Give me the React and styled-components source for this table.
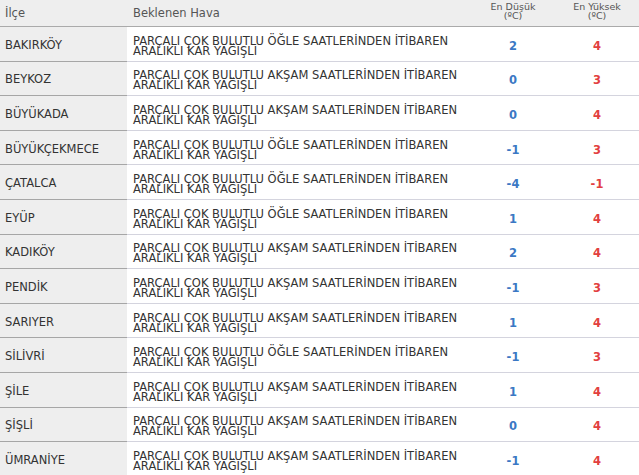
import React from "react";
import styled, { createGlobalStyle } from "styled-components";

const Global = createGlobalStyle`
  html, body { margin: 0; padding: 0; background: #fff; }
  body { font-family: "DejaVu Sans", Verdana, sans-serif; }
`;

const Table = styled.div`
  width: 639px;
  display: flex;
  flex-direction: column;
  color: #333;
  font-size: 11.5px;
`;

const HeadRow = styled.div`
  display: grid;
  grid-template-columns: 127px 344px 84px 84px;
  height: 26px;
  background: #eeeeee;
  border-bottom: 1px solid #aaaaaa;
`;

const HeadCell = styled.div`
  display: flex;
  align-items: center;
  padding-left: ${(p) => (p.$center ? 0 : p.$pad)}px;
  justify-content: ${(p) => (p.$center ? "center" : "flex-start")};
  text-align: ${(p) => (p.$center ? "center" : "left")};
  font-size: ${(p) => (p.$small ? 9.5 : 11.5)}px;
  line-height: ${(p) => (p.$small ? "9px" : "normal")};
  padding-bottom: ${(p) => (p.$small ? 4 : 1)}px;
  color: #555;
`;

const Row = styled.div`
  display: grid;
  grid-template-columns: 127px 344px 84px 84px;
  height: 34.6px;
`;

const NameCell = styled.div`
  background: #eeeeee;
  border-bottom: 1px solid #a6a6a6;
  display: flex;
  align-items: center;
  padding-left: 5px;
  padding-top: 2px;
  box-sizing: border-box;
`;

const Cell = styled.div`
  border-bottom: 1px solid #d4d4de;
  display: flex;
  align-items: center;
  box-sizing: border-box;
  padding-left: ${(p) => p.$pad || 0}px;
  justify-content: ${(p) => (p.$center ? "center" : "flex-start")};
`;

const Desc = styled.div`
  line-height: 10px;
  padding-top: 4px;
`;

const Num = styled.span`
  font-weight: bold;
  font-size: 11.5px;
  padding-top: 4px;
  color: ${(p) => (p.$hot ? "#e2403f" : "#3b78c4")};
`;

const rows = [
  ["BAKIRKÖY", "ÖĞLE", "2", "4"],
  ["BEYKOZ", "AKŞAM", "0", "3"],
  ["BÜYÜKADA", "AKŞAM", "0", "4"],
  ["BÜYÜKÇEKMECE", "ÖĞLE", "-1", "3"],
  ["ÇATALCA", "ÖĞLE", "-4", "-1"],
  ["EYÜP", "ÖĞLE", "1", "4"],
  ["KADIKÖY", "AKŞAM", "2", "4"],
  ["PENDİK", "AKŞAM", "-1", "3"],
  ["SARIYER", "AKŞAM", "1", "4"],
  ["SİLİVRİ", "ÖĞLE", "-1", "3"],
  ["ŞİLE", "AKŞAM", "1", "4"],
  ["ŞİŞLİ", "AKŞAM", "0", "4"],
  ["ÜMRANİYE", "AKŞAM", "-1", "4"],
];

export default function App() {
  return (
    <>
      <Global />
      <Table>
        <HeadRow>
          <HeadCell $pad={5}>İlçe</HeadCell>
          <HeadCell $pad={6}>Beklenen Hava</HeadCell>
          <HeadCell $center $small>
            En Düşük
            <br />
            (ºC)
          </HeadCell>
          <HeadCell $center $small>
            En Yüksek
            <br />
            (ºC)
          </HeadCell>
        </HeadRow>
        {rows.map(([name, time, lo, hi]) => (
          <Row key={name}>
            <NameCell>{name}</NameCell>
            <Cell $pad={6}>
              <Desc>
                PARÇALI ÇOK BULUTLU {time} SAATLERİNDEN İTİBAREN
                <br />
                ARALIKLI KAR YAĞIŞLI
              </Desc>
            </Cell>
            <Cell $center>
              <Num>{lo}</Num>
            </Cell>
            <Cell $center>
              <Num $hot>{hi}</Num>
            </Cell>
          </Row>
        ))}
      </Table>
    </>
  );
}
